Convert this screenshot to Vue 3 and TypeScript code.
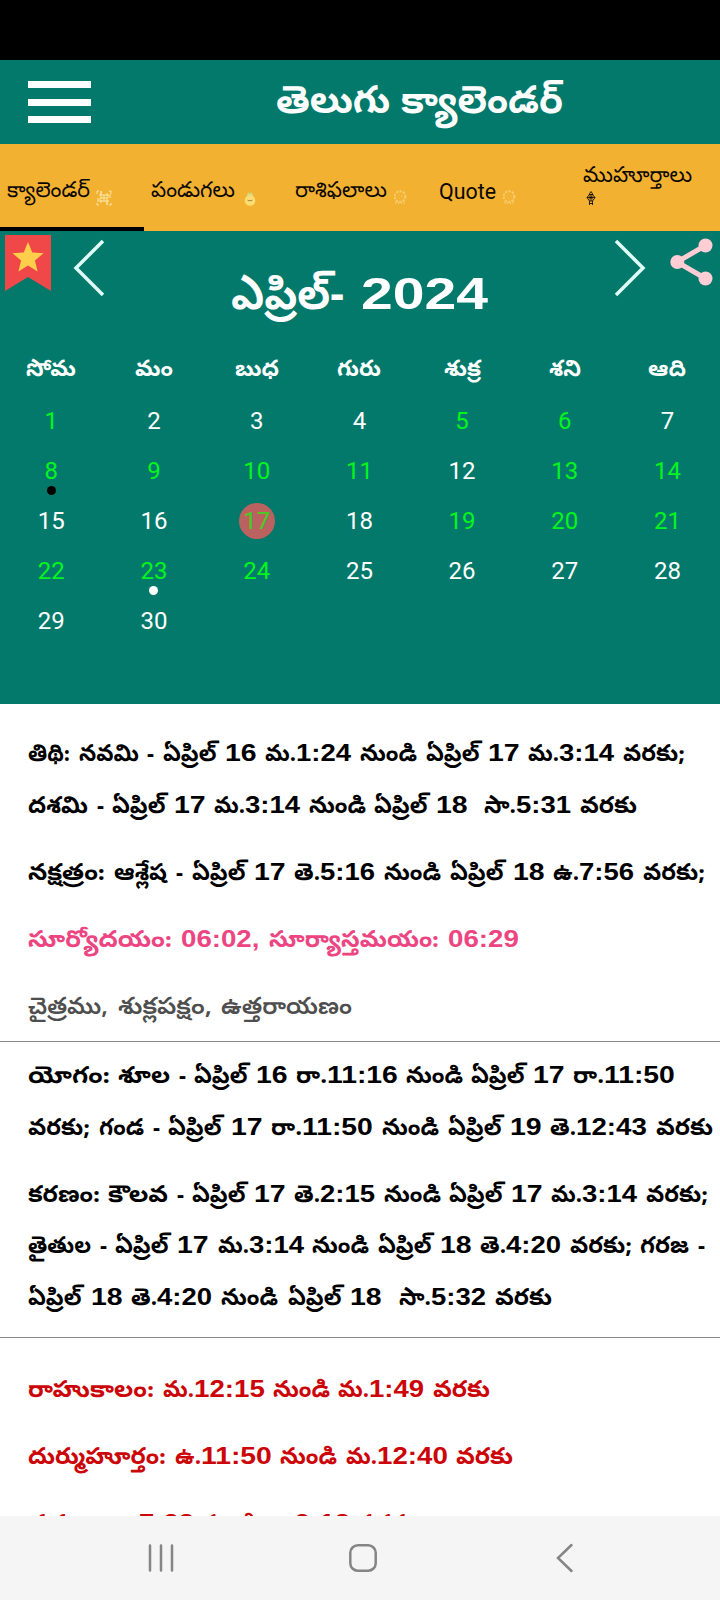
<script setup lang="ts">
interface Line { text: string; width: number }
interface Para { tone: string; lines: Line[] }
interface Weekday { name: string; width: number }
interface Run { text: string; width: number; numeric: boolean }
interface Word { runs: Run[]; wide: boolean }

const tabs = [
  { label: 'క్యాలెండర్', width: 83, icon: 'rangoli' },
  { label: 'పండుగలు', width: 84, icon: 'pot' },
  { label: 'రాశిఫలాలు', width: 92, icon: 'wheel' },
  { label: 'Quote', width: 57, icon: 'wheel' },
  { label: 'ముహూర్తాలు', width: 109, icon: 'lamp' },
]
const weekdays: Weekday[] = [
  { name: 'సోమ', width: 50 },
  { name: 'మం', width: 38 },
  { name: 'బుధ', width: 44 },
  { name: 'గురు', width: 44 },
  { name: 'శుక్ర', width: 37 },
  { name: 'శని', width: 32 },
  { name: 'ఆది', width: 38 },
]
const green = [1, 5, 6, 8, 9, 10, 11, 13, 14, 17, 19, 20, 21, 22, 23, 24]
const days = Array.from({ length: 30 }, (_, i) => i + 1)

// Drawn widths of the almanac words, in px.
const wordWidths: Record<string, number> = {
  'తిథి:': 42, 'నవమి': 60, '-': 7, 'ఏప్రిల్': 53.5, 'నుండి': 57, 'వరకు;': 62, 'వరకు': 57,
  'దశమి': 60, 'నక్షత్రం:': 77, 'ఆశ్లేష': 53, 'సూర్యోదయం:': 144, 'సూర్యాస్తమయం:': 170,
  'చైత్రము,': 80, 'శుక్లపక్షం,': 94, 'ఉత్తరాయణం': 131, 'యోగం:': 82, 'శూల': 52, 'గండ': 45,
  'కరణం:': 72, 'కౌలవ': 60, 'తైతుల': 63, 'గరజ': 49, 'రాహుకాలం:': 126, 'దుర్ముహూర్తం:': 138,
  'వర్జ్యం:': 74, 'మ.': 31, 'సా.': 32, 'తె.': 26, 'ఉ.': 26, 'రా.': 31,
}

function numberWidth(s: string): number {
  return [...s].reduce((sum, c) => sum + (c >= '0' && c <= '9' ? 15.8 : 7.6), 0)
}

function words(line: string): Word[] {
  return line.replace('  ', ' ~').split(' ').map((raw) => {
    const wide = raw.startsWith('~')
    const parts = raw.replace('~', '').split(/(\d[\d:,]*)/).filter(Boolean)
    return {
      wide,
      runs: parts.map((text) => {
        const numeric = /^\d/.test(text)
        return { text, numeric, width: numeric ? numberWidth(text) : wordWidths[text] ?? 50 }
      }),
    }
  })
}

const sections: Para[][] = [
  [
    { tone: 'dark', lines: [
      { text: 'తిథి: నవమి - ఏప్రిల్ 16 మ.1:24 నుండి ఏప్రిల్ 17 మ.3:14 వరకు;', width: 657 },
      { text: 'దశమి - ఏప్రిల్ 17 మ.3:14 నుండి ఏప్రిల్ 18  సా.5:31 వరకు', width: 609 },
    ] },
    { tone: 'dark', lines: [{ text: 'నక్షత్రం: ఆశ్లేష - ఏప్రిల్ 17 తె.5:16 నుండి ఏప్రిల్ 18 ఉ.7:56 వరకు;', width: 677 }] },
    { tone: 'pink', lines: [{ text: 'సూర్యోదయం: 06:02, సూర్యాస్తమయం: 06:29', width: 491 }] },
    { tone: 'gray', lines: [{ text: 'చైత్రము, శుక్లపక్షం, ఉత్తరాయణం', width: 324 }] },
  ],
  [
    { tone: 'dark', lines: [
      { text: 'యోగం: శూల - ఏప్రిల్ 16 రా.11:16 నుండి ఏప్రిల్ 17 రా.11:50', width: 647 },
      { text: 'వరకు; గండ - ఏప్రిల్ 17 రా.11:50 నుండి ఏప్రిల్ 19 తె.12:43 వరకు', width: 685 },
    ] },
    { tone: 'dark', lines: [
      { text: 'కరణం: కౌలవ - ఏప్రిల్ 17 తె.2:15 నుండి ఏప్రిల్ 17 మ.3:14 వరకు;', width: 680 },
      { text: 'తైతుల - ఏప్రిల్ 17 మ.3:14 నుండి ఏప్రిల్ 18 తె.4:20 వరకు; గరజ -', width: 677 },
      { text: 'ఏప్రిల్ 18 తె.4:20 నుండి ఏప్రిల్ 18  సా.5:32 వరకు', width: 524 },
    ] },
  ],
  [
    { tone: 'red', lines: [{ text: 'రాహుకాలం: మ.12:15 నుండి మ.1:49 వరకు', width: 462 }] },
    { tone: 'red', lines: [{ text: 'దుర్ముహూర్తం: ఉ.11:50 నుండి మ.12:40 వరకు', width: 485 }] },
    { tone: 'red', lines: [{ text: 'వర్జ్యం: రా.7:38 నుండి రా.9:18 వరకు', width: 385 }] },
  ],
]
</script>

<template>
  <div class="screen">
    <div class="status"></div>
    <header class="bar">
      <div class="burger"><i></i><i></i><i></i></div>
      <svg class="title" width="300" height="84">
        <text x="4" y="53" textLength="287" lengthAdjust="spacingAndGlyphs">తెలుగు క్యాలెండర్</text>
      </svg>
    </header>
    <nav class="tabs">
      <div v-for="(t, i) in tabs" :key="t.label" class="tab" :class="{ active: i === 0, stacked: i === 4, latin: i === 3 }">
        <svg class="label" :width="t.width" height="34">
          <text x="0" y="25" :textLength="t.width" lengthAdjust="spacingAndGlyphs">{{ t.label }}</text>
        </svg>
        <svg v-if="t.icon === 'rangoli'" class="glyph rangoli" width="16" height="16" viewBox="0 0 16 16">
          <path d="M1 4V1h2M13 1h2v3M15 13v2h-2M3 15H1v-2M5 1v4h10M11 3v3M15 7h-4v8M13 11h-2M11 15V11H1M5 13v-3M1 9h4V1M3 5h2M5 8h6M8 5v6" />
        </svg>
        <svg v-else-if="t.icon === 'pot'" class="glyph pot" width="12" height="16" viewBox="0 0 12 16">
          <path d="M4 1l2 1 2-1v2H4z" fill="#d9cf62" />
          <circle cx="6" cy="9.5" r="5.3" fill="#fbdd72" />
          <rect x="3" y="3" width="6" height="2" fill="#d8dc86" />
          <path d="M3.5 9l1.500 1 1-.8 1 .8 1.500-1" fill="none" stroke="#a98838" />
        </svg>
        <svg v-else-if="t.icon === 'wheel'" class="glyph wheel" width="14" height="15" viewBox="0 0 14 15">
          <circle cx="7" cy="6.500" r="5.300" stroke-width="2" stroke-dasharray="2.200 1.200" />
          <circle cx="7" cy="6.500" r="2" stroke-dasharray="1 1.500" />
          <path d="M3 11v3M5.500 12v2M8.500 12v2M11 11v3" />
        </svg>
        <svg v-else class="glyph lamp" width="10" height="15" viewBox="0 0 10 15">
          <path d="M5 0.5L7 3.500H3zM1 6.500l2.500-3h3l2.500 3L6.500 10h-3zM1 6.500h8M5 3.500v6.500M3.500 10v4M6.500 10v4M3 4.500l4 4M7 4.500l-4 4M3.500 12.500h3" />
        </svg>
      </div>
    </nav>

    <section class="calendar">
      <div class="month">
        <svg class="bookmark" width="46" height="57" viewBox="0 0 46 57">
          <path d="M0 0h46v56L23 42 0 56z" fill="#f04848" />
          <path d="M23 7l4.3 10.4 11.2.8-8.600 7.300 2.700 10.900L23 30.500l-9.600 5.900 2.700-10.900L7.500 18.200l11.200-.8z" fill="#ffcf4b" />
        </svg>
        <svg class="prev" width="32" height="58" viewBox="0 0 32 58"><path d="M30 2L3 29l27 27" /></svg>
        <svg class="heading" width="270" height="100">
          <text x="2" y="78" textLength="113" lengthAdjust="spacingAndGlyphs">ఎప్రిల్-</text>
          <text class="year" x="132" y="78" textLength="127" lengthAdjust="spacingAndGlyphs">2024</text>
        </svg>
        <svg class="next" width="32" height="58" viewBox="0 0 32 58"><path d="M2 2l27 27L2 56" /></svg>
        <svg class="share" width="43" height="48" viewBox="0 0 43 48">
          <path d="M35.500 7.500L7 24l28.500 16.500" fill="none" stroke="#ffcdd3" stroke-width="5" />
          <circle cx="35.500" cy="7.500" r="7" /><circle cx="7.300" cy="24" r="7" /><circle cx="35.500" cy="40.500" r="7" />
        </svg>
      </div>
      <div class="weekdays">
        <svg v-for="w in weekdays" :key="w.name" :width="w.width" height="46">
          <text x="0" y="29" :textLength="w.width" lengthAdjust="spacingAndGlyphs">{{ w.name }}</text>
        </svg>
      </div>
      <div class="days">
        <div v-for="d in days" :key="d" class="day" :class="{ green: green.includes(d), picked: d === 17, newmoon: d === 8, fullmoon: d === 23 }">
          <span>{{ d }}</span>
        </div>
      </div>
    </section>

    <main class="details">
      <section v-for="(s, i) in sections" :key="i" class="block">
        <div v-for="(p, j) in s" :key="j" class="para" :class="p.tone">
          <div v-for="l in p.lines" :key="l.text" class="line" :style="{ width: l.width + 'px' }">
            <span v-for="(w, k) in words(l.text)" :key="k" class="word" :class="{ wide: w.wide }">
              <svg v-for="(r, n) in w.runs" :key="n" :width="r.width" height="51.5">
                <text x="0" y="33.5" :class="{ num: r.numeric }" :textLength="r.width" lengthAdjust="spacingAndGlyphs">{{ r.text }}</text>
              </svg>
            </span>
          </div>
        </div>
      </section>
    </main>

    <footer class="nav">
      <svg width="28" height="28" viewBox="0 0 28 28"><path d="M3 1.500v25M14 1.500v25M25 1.500v25" /></svg>
      <svg width="28" height="28" viewBox="0 0 28 28"><rect x="1.300" y="1.300" width="25.400" height="25.400" rx="7.500" /></svg>
      <svg width="28" height="28" viewBox="0 0 28 28"><path d="M20.500 1L7 14l13.500 13" /></svg>
    </footer>
  </div>
</template>

<style>
body { margin: 0; }
</style>

<style scoped>
.screen { width: 720px; height: 1600px; display: flex; flex-direction: column; overflow: hidden; background: #fff; font-family: Roboto, "Noto Sans Telugu", sans-serif; }
svg { display: block; flex: none; overflow: visible; }
text { white-space: pre; }
.status { height: 60px; flex: none; background: #000; }
.bar { height: 84px; flex: none; background: #02796b; display: flex; align-items: center; }
.burger { width: 63px; height: 42px; margin-left: 28px; display: flex; flex-direction: column; justify-content: space-between; }
.burger i { height: 7px; background: #fff; }
.title { margin-left: 181px; fill: #fff; font: bold 38px "Noto Sans Telugu", sans-serif; }
.tabs { height: 87px; flex: none; background: #f2b130; display: grid; grid-template-columns: repeat(5, 144px); }
.tab { box-sizing: border-box; padding: 23px 0 0 7px; display: flex; align-items: flex-start; border-bottom: 4px solid transparent; }
.tab.active { border-color: #000; }
.label { font: 21.500px "Noto Sans Telugu", sans-serif; fill: #0b0703; margin-top: 5px; }
.latin .label { font: 22px Roboto, sans-serif; margin-top: 7px; }
.latin .label + .glyph { margin-top: 23px; }
.stacked { flex-direction: column; padding-top: 8px; }
.glyph { fill: none; margin-top: 23px; }
.rangoli { margin-left: 6px; stroke: #fbe7a8; }
.pot { margin-left: 9px; margin-top: 24px; }
.wheel { margin-left: 6px; stroke: #f9cd6c; }
.stacked .lamp { margin: 0 0 0 3px; stroke: #17100a; stroke-width: .9; }
.calendar { height: 473px; flex: none; background: #02796b; color: #fff; }
.month { height: 115px; display: flex; align-items: flex-start; }
.bookmark { margin: 3.500px 0 0 5px; }
.prev { margin: 8px 0 0 22px; fill: none; stroke: #dffcf7; stroke-width: 3.500; }
.heading { margin-left: 124px; font: bold 44px "Noto Sans Telugu", sans-serif; fill: #fff; }
.year { font: bold 45px "Liberation Sans", Arial, sans-serif; }
.next { margin: 8px 0 0 115px; fill: none; stroke: #dffcf7; stroke-width: 3.500; }
.share { margin: 7px 0 0 24px; fill: #ffcdd3; }
.weekdays { height: 50px; display: grid; grid-template-columns: repeat(7, 102.700px); justify-items: center; font: bold 22.500px "Noto Sans Telugu", sans-serif; fill: #fff; }
.weekdays svg { margin-top: 1px; }
.days { display: grid; grid-template-columns: repeat(7, 102.700px); grid-auto-rows: 50px; font: 24px Roboto, sans-serif; }
.day { position: relative; display: grid; place-items: center; }
.day span { width: 36px; height: 36px; line-height: 37px; text-align: center; border-radius: 50%; }
.green { color: #03f51c; }
.picked span { background: #b9625f; }
.picked { color: #42d020; }
.newmoon::after, .fullmoon::after { content: ""; position: absolute; left: 46.500px; top: 40px; width: 9px; height: 9px; border-radius: 50%; background: #000; }
.fullmoon::after { background: #fff; }
.details { flex: 1; min-height: 0; overflow: hidden; font: 700 23.500px "Noto Sans Telugu", sans-serif; }
.block { padding: 7px 0 0 28px; border-bottom: 1.500px solid #8a8a8a; box-sizing: border-box; height: 296px; }
.block:first-child { height: 338px; padding-top: 23px; }
.block:last-child { padding-top: 24.500px; border: 0; }
.para { margin-bottom: 15.500px; fill: #000; }
.line { display: flex; justify-content: space-between; }
.word { display: flex; }
.word.wide { margin-left: 8px; }
.num { font: bold 23.500px "Liberation Sans", Arial, sans-serif; }
.pink { fill: #ec4582; }
.gray { fill: #4e4e4e; font-weight: 600; }
.red { fill: #cb0508; }
.nav { height: 84px; flex: none; background: #f5f5f5; display: flex; padding-left: 147px; gap: 174px; box-sizing: border-box; align-items: center; }
.nav svg { fill: none; stroke: #858585; stroke-width: 2.500; stroke-linecap: round; }
</style>
